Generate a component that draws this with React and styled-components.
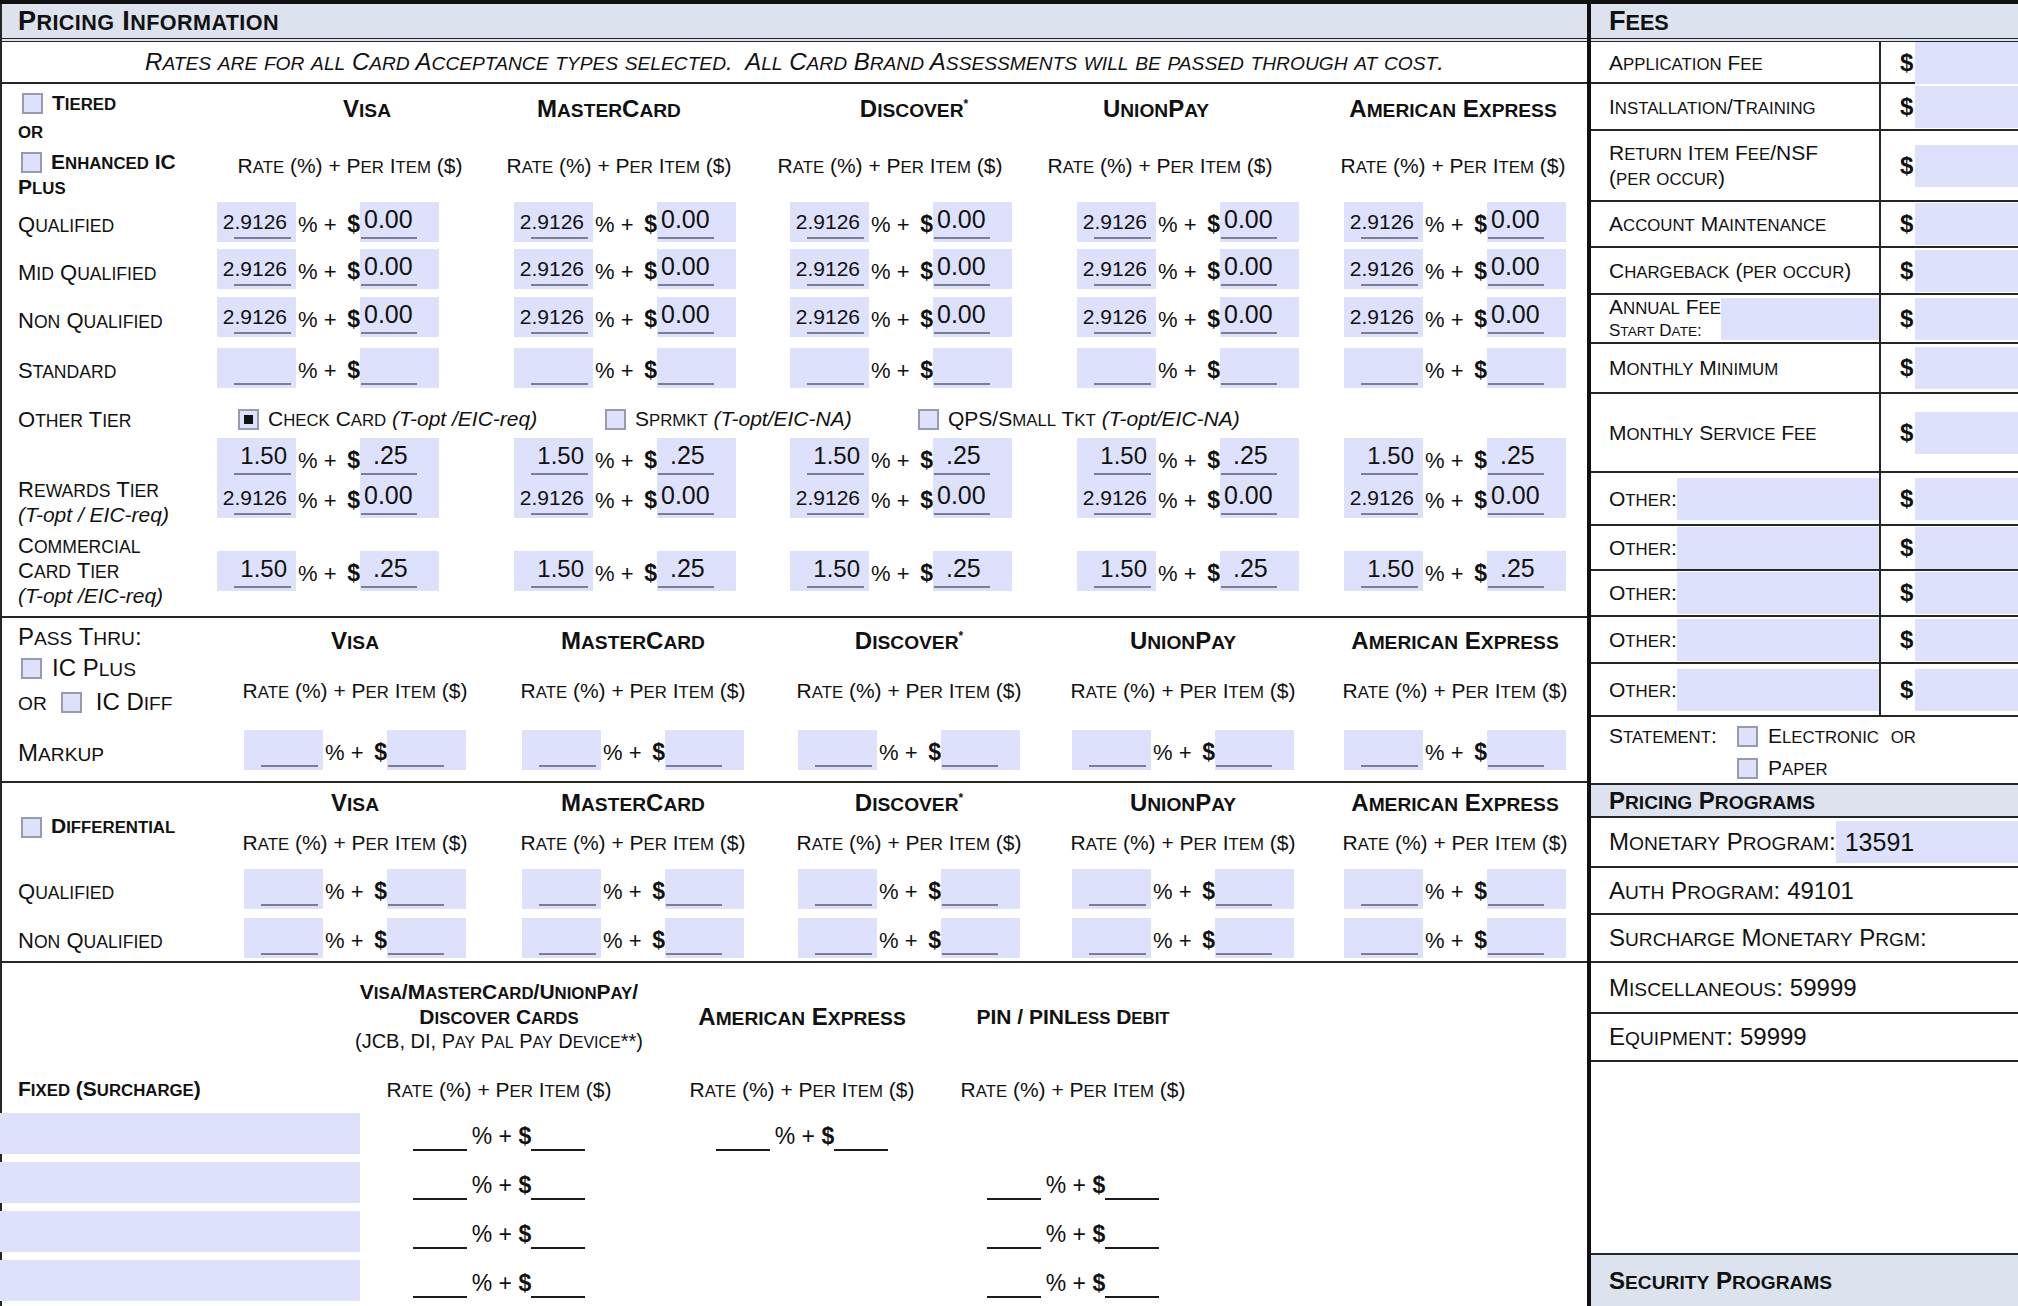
import React from "react";
import styled, { createGlobalStyle, css } from "styled-components";

const LAV = "#dee1fb";
const INK = "#111";
const RULE = "#262626";
const BAND = "#dce3ee";

const GlobalStyle = createGlobalStyle`
  *, *::before, *::after { box-sizing: border-box; }
  html, body { margin: 0; padding: 0; background: #fff; }
  body { font-family: "Liberation Sans", Arial, sans-serif; color: ${INK}; }
`;

// small caps the way the form does it: lower-case runs become smaller capitals
const Low = styled.span`
  font-size: 0.8em;
`;

const Caps = styled.span`
  white-space: pre;
`;

const SC = ({ children }) => (
  <Caps>
    {String(children)
      .split(/([a-z]+)/)
      .map((part, i) =>
        /^[a-z]+$/.test(part) ? (
          <Low key={i}>{part.toUpperCase()}</Low>
        ) : (
          <React.Fragment key={i}>{part}</React.Fragment>
        )
      )}
  </Caps>
);

const place = css`
  ${({ $c }) => ($c ? `grid-column: ${$c};` : "")}
  ${({ $r }) => ($r ? `grid-row: ${$r};` : "")}
`;

const nudge = css`
  padding-left: ${({ $dx = 0 }) => Math.max(0, $dx * 2)}px;
  padding-right: ${({ $dx = 0 }) => Math.max(0, -$dx * 2)}px;
`;

const Page = styled.div`
  width: 2018px;
  height: 1306px;
  display: flex;
  border-top: 4px solid #111;
  overflow: hidden;
`;

const LeftPane = styled.div`
  width: 1587px;
  flex: none;
  display: flex;
  flex-direction: column;
  border-left: 2px solid ${RULE};
`;

const RightPane = styled.div`
  flex: 1;
  min-width: 0;
  display: flex;
  flex-direction: column;
  border-left: 4px solid #111;
`;

const Band = styled.div`
  flex: none;
  height: ${({ $h }) => $h}px;
  display: flex;
  align-items: center;
  padding-left: ${({ $pad = 16 }) => $pad}px;
  background: ${BAND};
  border-bottom: ${({ $double, $open }) =>
    $open ? "none" : $double ? `4px double ${RULE}` : `2px solid ${RULE}`};
  font-size: ${({ $size }) => $size}px;
  font-weight: 700;
  letter-spacing: ${({ $ls = 0 }) => $ls}px;
  white-space: nowrap;
`;

const Note = styled.div`
  flex: none;
  height: 42px;
  display: flex;
  align-items: center;
  justify-content: center;
  border-bottom: 2px solid ${RULE};
  font-size: 24px;
  font-style: italic;
  white-space: nowrap;
`;

const Section = styled.div`
  flex: none;
  display: grid;
  grid-template-columns: ${({ $cols }) => $cols};
  grid-template-rows: ${({ $rows }) => $rows};
  align-items: center;
  justify-items: center;
  border-bottom: ${({ $open }) => ($open ? "none" : `2px solid ${RULE}`)};
`;

const Label = styled.div`
  ${place}
  grid-column: 1;
  justify-self: start;
  padding-left: 16px;
  padding-top: ${({ $low }) => ($low ? 8 : 0)}px;
  font-size: ${({ $size = 22 }) => $size}px;
  font-weight: ${({ $bold }) => ($bold ? 700 : 400)};
  line-height: ${({ $lh = 24 }) => $lh}px;
  white-space: nowrap;
  ${({ $end }) => ($end ? "align-self: end;" : "")}
`;

const LabelStack = styled.div`
  ${place}
  grid-column: 1;
  align-self: start;
  justify-self: start;
  padding: ${({ $top = 7 }) => $top}px 0 0 16px;
  font-size: ${({ $size }) => $size}px;
  font-weight: ${({ $bold }) => ($bold ? 700 : 400)};
  display: flex;
  flex-direction: column;
  white-space: nowrap;
`;

const StackLine = styled.div`
  height: ${({ $h }) => $h}px;
  display: flex;
  align-items: center;
  gap: ${({ $gap = 9 }) => $gap}px;
  padding-left: ${({ $in = 0 }) => $in}px;
`;

const Brand = styled.div`
  ${place}
  ${nudge}
  font-size: ${({ $size = 24 }) => $size}px;
  font-weight: 700;
  white-space: nowrap;
`;

const RateHead = styled.div`
  ${place}
  ${nudge}
  font-size: 21px;
  white-space: nowrap;
`;

const Sup = styled.span`
  font-size: 0.5em;
  vertical-align: 0.75em;
`;

const Check = styled.span`
  flex: none;
  width: 21px;
  height: 21px;
  border: 2px solid #989aae;
  background: ${LAV};
  display: inline-flex;
  align-items: center;
  justify-content: center;
  &::after {
    content: "";
    width: 9px;
    height: 9px;
    background: ${({ $on }) => ($on ? "#111" : "transparent")};
  }
`;

const OptRow = styled.div`
  ${place}
  grid-column: 2 / -1;
  justify-self: start;
  padding: 6px 0 0 60px;
  display: flex;
  align-items: center;
  font-size: 21px;
  white-space: nowrap;
`;

const Opt = styled.div`
  width: ${({ $w }) => ($w ? `${$w}px` : "auto")};
  display: flex;
  align-items: center;
  gap: 9px;
`;

const Em = styled.span`
  font-style: italic;
`;

const EmLine = styled.div`
  font-style: italic;
  font-size: 21px;
`;

/* rate entry: [rate box] % + $ [amount box] */
const EntryWrap = styled.div`
  ${place}
  display: flex;
  align-self: ${({ $top }) => ($top ? "start" : "center")};
`;

const ValBox = styled.div`
  width: 79px;
  background: ${LAV};
  display: flex;
  flex-direction: column;
`;

const Cell = styled.div`
  height: 40px;
  display: flex;
  align-items: flex-end;
  padding-bottom: 3px;
`;

const Field = styled.span`
  height: 28px;
  width: ${({ $w }) => $w}px;
  margin-left: ${({ $ml }) => $ml}px;
  display: flex;
  align-items: flex-end;
  justify-content: ${({ $right }) => ($right ? "flex-end" : "flex-start")};
  padding: 0 ${({ $right }) => ($right ? 4 : 0)}px 5px
    ${({ $pl = 0 }) => $pl}px;
  border-bottom: 2px solid #7b7d92;
  font-size: ${({ $size }) => $size}px;
  line-height: 1;
  white-space: nowrap;
`;

const OpsCol = styled.div`
  width: 64px;
  display: flex;
  flex-direction: column;
`;

const OpsCell = styled.div`
  height: 40px;
  display: flex;
  align-items: flex-end;
  padding: 0 0 6px 2px;
  font-size: 22px;
  line-height: 1;
  white-space: nowrap;
`;

const Dol = styled.span`
  margin-left: auto;
  font-weight: 700;
  font-size: ${({ $size = 23 }) => $size}px;
`;

const Entry = ({ lines, $c, $r, $top }) => (
  <EntryWrap $c={$c} $r={$r} $top={$top}>
    <ValBox>
      {lines.map(([rate], i) => (
        <Cell key={i}>
          <Field $right $w={57} $ml={17} $size={rate.length > 4 ? 21 : 24}>
            {rate}
          </Field>
        </Cell>
      ))}
    </ValBox>
    <OpsCol>
      {lines.map((_, i) => (
        <OpsCell key={i}>
          <span>%{"\u00a0"}+</span>
          <Dol>$</Dol>
        </OpsCell>
      ))}
    </OpsCol>
    <ValBox>
      {lines.map(([, amt], i) => (
        <Cell key={i}>
          <Field $w={56} $ml={1} $pl={amt.startsWith(".") ? 12 : 3} $size={25}>
            {amt}
          </Field>
        </Cell>
      ))}
    </ValBox>
  </EntryWrap>
);

/* fixed (surcharge) section */
const LavBar = styled.div`
  ${place}
  grid-column: 1;
  justify-self: stretch;
  height: 41px;
  margin-left: -2px;
  background: ${LAV};
`;

const FixedHead = styled.div`
  ${place}
  text-align: center;
  font-size: 21px;
  font-weight: 700;
  line-height: 23px;
  white-space: nowrap;
`;

const FixedSub = styled.div`
  font-size: 20px;
  font-weight: 400;
`;

const BlankRow = styled.div`
  ${place}
  display: flex;
  align-items: flex-end;
  padding-top: 9px;
  font-size: 23px;
  line-height: 1;
  white-space: nowrap;
`;

const Blank = styled.span`
  width: 54px;
  height: 24px;
  border-bottom: 2px solid #1c1c1c;
`;

const Sym = styled.span`
  margin-left: 5px;
  padding-bottom: 3px;
`;

const BlankDol = styled.span`
  font-weight: 700;
  padding-bottom: 3px;
`;

const BlankEntry = (props) => (
  <BlankRow {...props}>
    <Blank />
    <Sym>%{"\u00a0"}+{"\u00a0"}</Sym>
    <BlankDol>$</BlankDol>
    <Blank />
  </BlankRow>
);

/* fees column */
const FeeRow = styled.div`
  flex: none;
  height: ${({ $h }) => $h}px;
  display: grid;
  grid-template-columns: 290px 1fr;
  border-bottom: 2px solid ${RULE};
`;

const FeeLabel = styled.div`
  display: flex;
  align-items: center;
  padding-left: 18px;
  border-right: 2px solid ${RULE};
  font-size: 21px;
  white-space: nowrap;
`;

const FeeAmt = styled.div`
  display: flex;
  align-items: center;
  padding-left: 19px;
`;

const FeeDollar = styled.span`
  width: 15px;
  font-size: 24px;
  font-weight: 700;
`;

const FeeBox = styled.div`
  flex: 1;
  align-self: center;
  height: 42px;
  max-height: 100%;
  background: ${LAV};
`;

const TwoLine = styled.div`
  display: flex;
  flex-direction: column;
  line-height: ${({ $lh = 23 }) => $lh}px;
`;

const SmallLine = styled.div`
  font-size: 17px;
  line-height: 20px;
`;

const StatementRow = styled.div`
  flex: none;
  height: 68px;
  display: grid;
  grid-template-columns: 128px auto;
  padding: 3px 0 0 18px;
  border-bottom: 2px solid ${RULE};
  font-size: 21px;
  white-space: nowrap;
`;

const StLabel = styled.div`
  height: 32px;
  display: flex;
  align-items: center;
`;

const StOpt = styled.div`
  height: 32px;
  display: flex;
  align-items: center;
  gap: 10px;
`;

const ProgRow = styled.div`
  flex: none;
  height: ${({ $h }) => $h}px;
  display: flex;
  align-items: center;
  padding-left: 18px;
  border-bottom: 2px solid ${RULE};
  font-size: 24px;
  white-space: nowrap;
`;

const ProgValue = styled.span`
  padding-left: 7px;
`;

const ProgBox = styled.div`
  flex: 1;
  height: 42px;
  display: flex;
  align-items: center;
  padding-left: 9px;
  background: ${LAV};
  font-size: 25px;
`;

const Spacer = styled.div`
  flex: none;
  height: ${({ $h }) => $h}px;
  border-bottom: 2px solid ${RULE};
`;

const BRANDS = [
  { name: "Visa" },
  { name: "MasterCard" },
  { name: "Discover", star: true },
  { name: "UnionPay" },
  { name: "American Express" },
];

const TIER_BRAND_DX = [39, -16, 13, -32, -2];
const TIER_RATE_DX = [22, -6, -11, -28, -2];

const FULL = [["2.9126", "0.00"]];
const EMPTY = [["", ""]];

const TIER_ROWS = [
  { label: "Qualified", r: 3, lines: FULL },
  { label: "Mid Qualified", r: 4, lines: FULL },
  { label: "Non Qualified", r: 5, lines: FULL },
  { label: "Standard", r: 6, lines: EMPTY },
];

const FEES = [
  { h: 42, label: "Application Fee" },
  { h: 47, label: "Installation/Training" },
  { h: 71, label: ["Return Item Fee/NSF", "(per occur)"] },
  { h: 46, label: "Account Maintenance" },
  { h: 47, label: "Chargeback (per occur)" },
  { h: 49, annual: true },
  { h: 50, label: "Monthly Minimum" },
  { h: 79, label: "Monthly Service Fee" },
  { h: 53, other: true },
  { h: 45, other: true },
  { h: 46, other: true },
  { h: 47, other: true },
  { h: 53, other: true },
];

const PROGRAMS = [
  { h: 50, label: "Monetary Program:", boxed: "13591" },
  { h: 47, label: "Auth Program:", value: "49101" },
  { h: 48, label: "Surcharge Monetary Prgm:" },
  { h: 51, label: "Miscellaneous:", value: "59999" },
  { h: 48, label: "Equipment:", value: "59999" },
];

const BrandName = ({ brand }) => (
  <>
    <SC>{brand.name}</SC>
    {brand.star && <Sup>*</Sup>}
  </>
);

const RATE_TEXT = "Rate (%) + Per Item ($)";

const Tiered = () => (
  <Section
    $cols="176px 300px 294px 258px 316px 218px"
    $rows="50px 64px 47px 48px 48px 53px 44px 88px 90px"
  >
    <LabelStack $r="1 / span 2" $size={21} $bold>
      <StackLine $h={24} $in={4}>
        <Check />
        <SC>Tiered</SC>
      </StackLine>
      <StackLine $h={32}>
        <SC>or</SC>
      </StackLine>
      <StackLine $h={30} $in={3}>
        <Check />
        <SC>Enhanced IC</SC>
      </StackLine>
      <StackLine $h={20}>
        <SC>Plus</SC>
      </StackLine>
    </LabelStack>

    {BRANDS.map((b, i) => (
      <Brand key={b.name} $c={i + 2} $r={1} $dx={TIER_BRAND_DX[i]}>
        <BrandName brand={b} />
      </Brand>
    ))}
    {BRANDS.map((b, i) => (
      <RateHead key={b.name} $c={i + 2} $r={2} $dx={TIER_RATE_DX[i]}>
        <SC>{RATE_TEXT}</SC>
      </RateHead>
    ))}

    {TIER_ROWS.map((row) => (
      <React.Fragment key={row.label}>
        <Label $r={row.r} $low>
          <SC>{row.label}</SC>
        </Label>
        {BRANDS.map((b, i) => (
          <Entry key={b.name} $c={i + 2} $r={row.r} lines={row.lines} />
        ))}
      </React.Fragment>
    ))}

    <Label $r={7} $low>
      <SC>Other Tier</SC>
    </Label>
    <OptRow $r={7}>
      <Opt $w={367}>
        <Check $on />
        <span>
          <SC>Check Card</SC> <Em>(T-opt /EIC-req)</Em>
        </span>
      </Opt>
      <Opt $w={313}>
        <Check />
        <span>
          <SC>Sprmkt</SC> <Em>(T-opt/EIC-NA)</Em>
        </span>
      </Opt>
      <Opt>
        <Check />
        <span>
          <SC>QPS/Small Tkt</SC> <Em>(T-opt/EIC-NA)</Em>
        </span>
      </Opt>
    </OptRow>

    <Label $r={8} $end $lh={23}>
      <div>
        <SC>Rewards Tier</SC>
      </div>
      <EmLine>(T-opt / EIC-req)</EmLine>
    </Label>
    {BRANDS.map((b, i) => (
      <Entry
        key={b.name}
        $c={i + 2}
        $r={8}
        $top
        lines={[
          ["1.50", ".25"],
          ["2.9126", "0.00"],
        ]}
      />
    ))}

    <Label $r={9}>
      <div>
        <SC>Commercial</SC>
      </div>
      <div>
        <SC>Card Tier</SC>
      </div>
      <EmLine>(T-opt /EIC-req)</EmLine>
    </Label>
    {BRANDS.map((b, i) => (
      <Entry key={b.name} $c={i + 2} $r={9} lines={[["1.50", ".25"]]} />
    ))}
  </Section>
);

const BRAND_COLS = "215px 276px 280px 272px 276px 268px";

const PassThru = () => (
  <Section $cols={BRAND_COLS} $rows="46px 54px 63px">
    <LabelStack $r="1 / span 2" $size={24} $top={6}>
      <StackLine $h={26}>
        <SC>Pass Thru:</SC>
      </StackLine>
      <StackLine $h={36} $in={3} $gap={10}>
        <Check />
        <SC>IC Plus</SC>
      </StackLine>
      <StackLine $h={32} $gap={14}>
        <SC>or</SC>
        <Check />
        <SC>IC Diff</SC>
      </StackLine>
    </LabelStack>
    {BRANDS.map((b, i) => (
      <Brand key={b.name} $c={i + 2} $r={1}>
        <BrandName brand={b} />
      </Brand>
    ))}
    {BRANDS.map((b, i) => (
      <RateHead key={b.name} $c={i + 2} $r={2}>
        <SC>{RATE_TEXT}</SC>
      </RateHead>
    ))}
    <Label $r={3} $size={24} $low>
      <SC>Markup</SC>
    </Label>
    {BRANDS.map((b, i) => (
      <Entry key={b.name} $c={i + 2} $r={3} lines={EMPTY} />
    ))}
  </Section>
);

const Differential = () => (
  <Section $cols={BRAND_COLS} $rows="40px 40px 51px 47px">
    <Label $r="1 / span 2" $size={21} $bold $low>
      <StackLine $h={24} $in={3}>
        <Check />
        <SC>Differential</SC>
      </StackLine>
    </Label>
    {BRANDS.map((b, i) => (
      <Brand key={b.name} $c={i + 2} $r={1}>
        <BrandName brand={b} />
      </Brand>
    ))}
    {BRANDS.map((b, i) => (
      <RateHead key={b.name} $c={i + 2} $r={2}>
        <SC>{RATE_TEXT}</SC>
      </RateHead>
    ))}
    {["Qualified", "Non Qualified"].map((label, k) => (
      <React.Fragment key={label}>
        <Label $r={k + 3} $low>
          <SC>{label}</SC>
        </Label>
        {BRANDS.map((b, i) => (
          <Entry key={b.name} $c={i + 2} $r={k + 3} lines={EMPTY} />
        ))}
      </React.Fragment>
    ))}
  </Section>
);

const Fixed = () => (
  <Section
    $open
    $cols="358px 278px 328px 214px"
    $rows="108px 38px 49px 49px 49px 49px"
  >
    <FixedHead $c={2} $r={1}>
      <div>
        <SC>Visa/MasterCard/UnionPay/</SC>
      </div>
      <div>
        <SC>Discover Cards</SC>
      </div>
      <FixedSub>
        <SC>(JCB, DI, Pay Pal Pay Device**)</SC>
      </FixedSub>
    </FixedHead>
    <Brand $c={3} $r={1}>
      <SC>American Express</SC>
    </Brand>
    <Brand $c={4} $r={1} $size={21}>
      <SC>PIN / PINLess Debit</SC>
    </Brand>

    <Label $r={2} $size={21} $bold>
      <SC>Fixed (Surcharge)</SC>
    </Label>
    {[2, 3, 4].map((c) => (
      <RateHead key={c} $c={c} $r={2}>
        <SC>{RATE_TEXT}</SC>
      </RateHead>
    ))}

    {[3, 4, 5, 6].map((r) => (
      <React.Fragment key={r}>
        <LavBar $r={r} />
        <BlankEntry $c={2} $r={r} />
      </React.Fragment>
    ))}
    <BlankEntry $c={3} $r={3} />
    {[4, 5, 6].map((r) => (
      <BlankEntry key={r} $c={4} $r={r} />
    ))}
  </Section>
);

const FeeLabelContent = ({ fee }) => {
  if (fee.annual) {
    return (
      <>
        <TwoLine $lh={24}>
          <div>
            <SC>Annual Fee</SC>
          </div>
          <SmallLine>
            <SC>Start Date:</SC>
          </SmallLine>
        </TwoLine>
        <FeeBox />
      </>
    );
  }
  if (fee.other) {
    return (
      <>
        <SC>Other:</SC>
        <FeeBox />
      </>
    );
  }
  if (Array.isArray(fee.label)) {
    return (
      <TwoLine>
        {fee.label.map((l) => (
          <div key={l}>
            <SC>{l}</SC>
          </div>
        ))}
      </TwoLine>
    );
  }
  return <SC>{fee.label}</SC>;
};

const Fees = () => (
  <RightPane>
    <Band $h={38} $size={27} $pad={18} $double>
      <SC>Fees</SC>
    </Band>
    {FEES.map((fee, i) => (
      <FeeRow key={i} $h={fee.h}>
        <FeeLabel>
          <FeeLabelContent fee={fee} />
        </FeeLabel>
        <FeeAmt>
          <FeeDollar>$</FeeDollar>
          <FeeBox />
        </FeeAmt>
      </FeeRow>
    ))}
    <StatementRow>
      <StLabel>
        <SC>Statement:</SC>
      </StLabel>
      <div>
        <StOpt>
          <Check />
          <SC>{"Electronic  or"}</SC>
        </StOpt>
        <StOpt>
          <Check />
          <SC>Paper</SC>
        </StOpt>
      </div>
    </StatementRow>
    <Band $h={33} $size={24} $pad={18}>
      <SC>Pricing Programs</SC>
    </Band>
    {PROGRAMS.map((p) => (
      <ProgRow key={p.label} $h={p.h}>
        <SC>{p.label}</SC>
        {p.value && <ProgValue>{p.value}</ProgValue>}
        {p.boxed && <ProgBox>{p.boxed}</ProgBox>}
      </ProgRow>
    ))}
    <Spacer $h={193} />
    <Band $h={51} $size={24} $pad={18} $open>
      <SC>Security Programs</SC>
    </Band>
  </RightPane>
);

export default function App() {
  return (
    <>
      <GlobalStyle />
      <Page>
        <LeftPane>
          <Band $h={38} $size={27} $ls={0.4} $double>
            <SC>Pricing Information</SC>
          </Band>
          <Note>
            <SC>
              {
                "Rates are for all Card Acceptance types selected.  All Card Brand Assessments will be passed through at cost."
              }
            </SC>
          </Note>
          <Tiered />
          <PassThru />
          <Differential />
          <Fixed />
        </LeftPane>
        <Fees />
      </Page>
    </>
  );
}
